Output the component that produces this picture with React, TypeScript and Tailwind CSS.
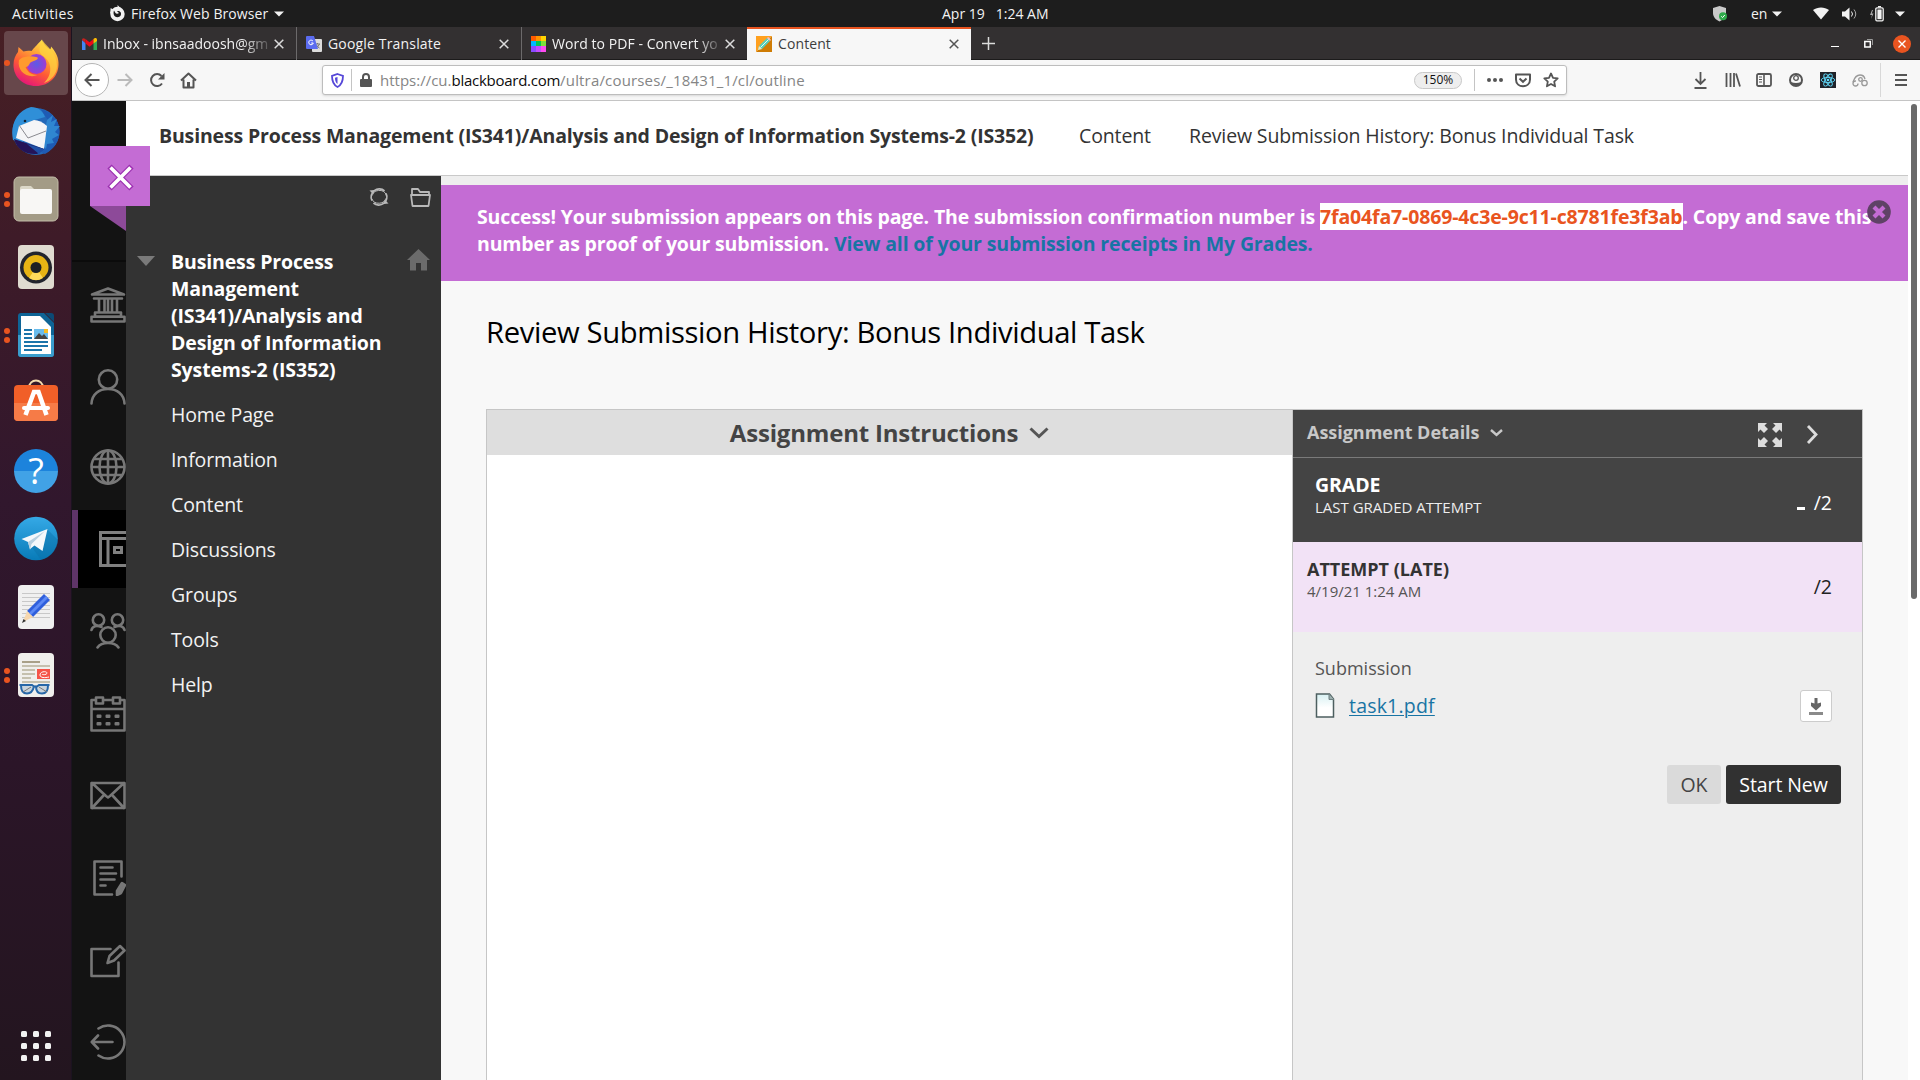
import React from "react";

type P = { children?: React.ReactNode; className?: string };

const Caret = ({ className = "" }: P) => (
  <svg width="10" height="6" viewBox="0 0 10 6" className={className}><path d="M0 .5h10L5 5.5z" fill="#f2f2f2" /></svg>
);

/* ---------- Desktop top bar ---------- */
function TopBar() {
  return (
    <div className="relative flex h-[27px] shrink-0 items-center bg-[#1d1d1d] text-[14px] leading-[27px] text-[#f2f2f2]">
      <span className="ml-3 w-[96px] tracking-[0.43px]">Activities</span>
      <svg width="17" height="17" viewBox="0 0 17 17" className="ml-px">
        <circle cx="8.5" cy="9" r="7.2" fill="#f2f2f2" />
        <path d="M8.5 0 12.5 4 9 5zM1 9 1.7 3l3 2z" fill="#f2f2f2" />
        <path d="M5 5.5C4 8 4.500 12 8.500 12.200c3 0 4-2.500 3.300-4.700C11 6 9.500 5.500 8 6.200L10 8c-1 1-3 1-3.500 0z" fill="#1d1d1d" />
      </svg>
      <span className="ml-[5px] w-[143px] whitespace-nowrap tracking-[0.08px]">Firefox Web Browser</span>
      <Caret />
      <div className="absolute left-[942px] top-0 whitespace-pre tracking-[0px]">Apr 19{"   "}1:24 AM</div>
      <div className="ml-auto flex items-center pr-[15px]">
        <svg width="15" height="16" viewBox="0 0 15 16">
          <path d="M6.500 0 13 2v5c0 4-3 7-6.500 8.500C3 14 0 11 0 7V2z" fill="#c9c9c9" />
          <circle cx="10" cy="10.200" r="4" fill="#2eaa4a" />
          <path d="m8.200 10.300 1.300 1.300 2.300-2.600" stroke="#fff" fill="none" />
        </svg>
        <span className="ml-[23px] w-[21px]">en</span>
        <Caret />
        <svg width="16" height="13" viewBox="0 0 16 13" className="ml-[31px]"><path d="M8 12.500 0 3C4.500-.5 11.500-.5 16 3z" fill="#f2f2f2" /></svg>
        <svg width="16" height="14" viewBox="0 0 16 14" className="ml-[13px]">
          <path d="M0 4.500h3L7.500.5v13L3 9.500H0z" fill="#f2f2f2" />
          <path d="M9.500 4.500q2 2.500 0 5" stroke="#f2f2f2" fill="none" /><path d="M12 2.500q3.500 4.500 0 9" stroke="#aaa" fill="none" />
        </svg>
        <svg width="15" height="16" viewBox="0 0 15 16" className="ml-[11px]">
          <path d="M3 4 1 9h2l-1 4 2.500-5.500H2.800L4 4z" fill="#aaa" />
          <rect x="6.800" y="1.800" width="7.400" height="13" rx="1.200" stroke="#f2f2f2" strokeWidth="1.300" fill="none" /><rect x="8.400" y="3.500" width="4.200" height="9.700" fill="#f2f2f2" /><rect x="9" y="0" width="3" height="1.500" fill="#f2f2f2" />
        </svg>
        <Caret className="ml-[11px]" />
      </div>
    </div>
  );
}

/* ---------- Dock ---------- */
function DockItem({ dots = 0, active = false, children }: P & { dots?: number; active?: boolean }) {
  return (
    <div className="relative flex h-16 w-[72px] shrink-0 justify-center">
      <div className="absolute left-1 top-0 flex h-16 flex-col items-start justify-center gap-[3px]">
        {Array.from({ length: dots }, (_, i) => <i key={i} className="size-[6px] rounded-full bg-[#e95420]" />)}
      </div>
      <div className={active ? "grid h-16 w-16 place-items-center rounded bg-[#67474b]" : "grid h-16 w-16 place-items-center"}>{children}</div>
    </div>
  );
}

function Dock() {
  return (
    <div className="flex w-[72px] shrink-0 flex-col items-center gap-1 bg-[linear-gradient(180deg,#471f24_0%,#3e1b28_20%,#31172d_45%,#2b1528_70%,#23151f_100%)] pt-1 shadow-[inset_-1px_0_0_#1b1320]">
      <DockItem active dots={1}>
        <svg width="48" height="48" viewBox="0 0 48 48">
          <defs>
            <linearGradient id="ff" x1=".8" y1="0" x2=".3" y2="1"><stop offset="0" stopColor="#fff44f" /><stop offset=".35" stopColor="#ffa436" /><stop offset=".65" stopColor="#ff5a35" /><stop offset="1" stopColor="#e3147b" /></linearGradient>
            <radialGradient id="fp"><stop offset="0" stopColor="#5b5be6" /><stop offset="1" stopColor="#a13bd0" /></radialGradient>
          </defs>
          <path d="M24 47C11 47 1.500 38 1.500 26c0-6 2-10 4.500-13l.5-5 5 4.500c3-1 5.500-1 8-.5C22 9 24 7 30 .5c1 4 4 7 8 10 1-1 1-2 1-3C44 13 47 19 46.500 26 46 38 37 47 24 47z" fill="url(#ff)" />
          <circle cx="24.500" cy="25" r="10" fill="url(#fp)" />
          <path d="M7 21c2-2 4-3 6-3 3-1 7-1 11 0 2 .2 2 1 1.500 2-2 2-7 2-8 5-1 2-2 3-4 3 2 5 6 8 12 8-9 4-21-3-18.500-15z" fill="#ff9a2e" />
          <path d="M31 2c4 6 14 12 14 25 0 8-6 15-13 17 5-5 7-11 6-17-1-5-4-8-8-11-4-3-3-9 1-14z" fill="#ffd23f" opacity=".75" />
        </svg>
      </DockItem>
      <DockItem>
        <svg width="50" height="50" viewBox="0 0 50 50">
          <circle cx="25" cy="25.500" r="23.500" fill="#2368b8" />
          <path d="M2 34C-1 20 5 5 20 1c7 0 12 4 14 10l-14 4-9 12 1 10z" fill="#2f8fd8" />
          <path d="M30 3c24 7 24 35 4 45l-4-2 4-12 4-18z" fill="#1e5bb4" />
          <path d="m36 14 6-5-2 7 6-3-3 7 6 0-5 6 4 3-7 4 2 4-7 1-1 5-4-4z" fill="#2f86d0" />
          <path d="m8 20 15-6c4 0 9 2 13 6l-3 23L5 32z" fill="#f5f5f7" /><path d="m8 19 9 13 18-7" fill="none" stroke="#8a8a90" />
          <path d="M3 33 33 43l-7 5C14 49 6 43 3 33z" fill="#241458" /><path d="m16 38 17 5-5 5z" fill="#1e4fa6" /><circle cx="14" cy="15" r="1.300" fill="#123" />
        </svg>
      </DockItem>
      <DockItem dots={2}>
        <svg width="46" height="46" viewBox="0 0 46 46">
          <rect x="1" y="1" width="44" height="44" rx="5" fill="#a39b86" stroke="#c3bda9" />
          <path d="M7 12q0-2 2-2h9l4 4v6H7z" fill="#dcd8c8" /><rect x="7" y="13" width="32" height="25" rx="2" fill="#f8f7f5" />
        </svg>
      </DockItem>
      <DockItem>
        <svg width="46" height="46" viewBox="0 0 46 46">
          <rect x="5" y="1" width="36" height="44" rx="4" fill="#dfdbd0" /><circle cx="23" cy="23.500" r="16" fill="#22252d" /><circle cx="23" cy="23.500" r="12.500" fill="#e7b414" />
          <path d="M23 23.500 16 34a12.500 12.500 0 0 0 14 0z" fill="#ffd95a" /><circle cx="23" cy="23.500" r="5.500" fill="#1d1f24" />
        </svg>
      </DockItem>
      <DockItem dots={2}>
        <svg width="46" height="46" viewBox="0 0 46 46">
          <path d="M8 1h23l10 10v31q0 3-3 3H8q-3 0-3-3V4q0-3 3-3z" fill="#0e6496" /><path d="M5 23h36v19q0 3-3 3H8q-3 0-3-3z" fill="#3a9dcd" />
          <path d="M32 1h6q3 0 3 3v6z" fill="#0c4a75" /><path d="M8 4h19l11 11v27H8z" fill="#fff" />
          <path d="M11 18h8M11 22h8M11 26h8M11 30h24M11 34h24M11 38h18" stroke="#1b74aa" strokeWidth="2" />
          <rect x="21" y="17" width="14" height="10" fill="#69bcec" /><path d="m21 27 5-6 3 3 2-2 4 5z" fill="#444" /><rect x="31" y="17" width="4" height="4" fill="#f6bd24" />
        </svg>
      </DockItem>
      <DockItem>
        <svg width="46" height="50" viewBox="0 -3 46 50">
          <path d="M16 7c0-10 14-10 14 0" stroke="#f4dcae" strokeWidth="2" fill="none" /><rect x="1" y="4" width="44" height="36" rx="4" fill="#f15f28" /><path d="M1 22h44v14q0 4-4 4H5q-4 0-4-4z" fill="#f67b47" />
          <path d="m12.500 34 8.500-23h4.500l8 23" stroke="#fff" strokeWidth="4.500" fill="none" /><path d="M11 27h24" stroke="#fff" strokeWidth="4" strokeLinecap="round" />
        </svg>
      </DockItem>
      <DockItem>
        <div className="grid size-11 place-items-center rounded-full bg-[linear-gradient(180deg,#1c83dc_0_50%,#41a2e6_50%)] text-[36px] leading-none text-white">?</div>
      </DockItem>
      <DockItem>
        <svg width="46" height="46" viewBox="0 0 46 46">
          <defs><linearGradient id="tg" x2="0" y2="1"><stop stopColor="#35a9e6" /><stop offset="1" stopColor="#087bb8" /></linearGradient></defs>
          <circle cx="23" cy="22.500" r="21.800" fill="url(#tg)" /><path d="m34 13 11 11a22 22 0 0 1-17 20L18 30z" fill="#0a6fa6" opacity=".4" />
          <path d="M8.500 23 34.500 13l-5 22-8-5.500L17 33l-2-7z" fill="#f4f8fb" /><path d="m15 26 17-11-13.500 13L17 34z" fill="#b7cfdf" />
        </svg>
      </DockItem>
      <DockItem>
        <svg width="46" height="46" viewBox="0 0 46 46">
          <rect x="5" y="1" width="36" height="44" rx="4" fill="#f0f0f0" /><path d="M9 9.500h28M9 13.500h28M9 17.500h28M9 21.500h28M9 25.500h28M9 29.500h28M9 33.500h28" stroke="#c8c8c8" />
          <path d="m31 10 6 6-17 17-6-6z" fill="#2f5fdc" /><path d="m33 12 2 2-17 17-2-2z" fill="#5d89f5" /><path d="m14 27 6 6-10 5z" fill="#f6d7ae" /><path d="m10.500 35 2.500 2-4 2z" fill="#333" />
        </svg>
      </DockItem>
      <DockItem dots={2}>
        <svg width="46" height="46" viewBox="0 0 46 46">
          <rect x="5" y="1" width="36" height="44" rx="4" fill="#f0efec" /><path d="M9 10h18" stroke="#a9a088" strokeWidth="2" /><path d="M9 14h28M9 18h13M9 22h13M9 26h9M9 30h28" stroke="#c5c0ae" strokeWidth="2" />
          <rect x="24" y="17" width="13" height="10" fill="#f55448" /><path d="M36 25c-4 1-9 1-9-2 0-4 7-4 7-2s-5 2-5 1" stroke="#fff" fill="none" />
          <path d="M6.500 33h12.500l2 1.500h3l2-1.500h10.500M8 33.500c0 5 2 8 6 8s6-3 7-7M35 33.500c0 5-2 8-6 8s-6-3-6-7" fill="#c7d3dc" stroke="#2667a8" strokeWidth="2" /><path d="m10 40 8-5m8 0 8 5" stroke="#777" />
        </svg>
      </DockItem>
      <div className="mb-[19px] mt-auto grid grid-cols-3 gap-[6px]">
        {Array.from({ length: 9 }, (_, i) => <i key={i} className="size-[6px] rounded-[1.500px] bg-[#f2f2f2]" />)}
      </div>
    </div>
  );
}

/* ---------- Browser chrome ---------- */
const X = ({ c }: { c: string }) => <svg width="10" height="10" viewBox="0 0 10 10" className="shrink-0"><path d="m.7.7 8.600 8.600m0-8.600L.7 9.300" stroke={c} strokeWidth="1.500" /></svg>;

function TabStrip() {
  return (
    <div className="flex h-[33px] shrink-0 items-stretch bg-[#333031] text-[14px] leading-[33px] text-[#f2f2f2] shadow-[inset_0_-1px_0_#1c1b1b]">
      <div className="flex w-[225px] items-center border-r border-[#6c6a6b] pl-[10px] pr-3">
        <svg width="15" height="12" viewBox="0 0 15 12">
          <path d="M0 2v10h3.500V5z" fill="#4285f4" /><path d="M15 2v10h-3.500V5z" fill="#34a853" /><path d="m0 2 3.500 3V1L1.500.2C.5.200 0 1 0 2z" fill="#c5221f" /><path d="m3.500 1 4 3.200 4-3.200v4.500l-4 3.200-4-3.200z" fill="#ea0a1a" /><path d="M11.500 1v4.500L15 3V1.500C15 .4 13.500-.3 12.500.3z" fill="#fbbc04" />
        </svg>
        <span className="ml-[6px] whitespace-nowrap [mask-image:linear-gradient(90deg,#000_84%,rgba(0,0,0,0.2))]">Inbox - ibnsaadoosh@gm</span>
        <span className="ml-auto"><X c="#dcdcdc" /></span>
      </div>
      <div className="flex w-[224px] items-center pl-[9px] pr-[12px]">
        <svg width="16" height="16" viewBox="0 0 16 16"><rect x="6" y="3" width="10" height="13" rx="1" fill="#dcdcdc" /><path d="M9 8h5m-2.500-1v1m2 0q-1 3-4 4m1-3q1 2 3 3" stroke="#777" fill="none" /><path d="M1 0h7l4 13H1q-1 0-1-1V1q0-1 1-1z" fill="#5b6cf0" /><path d="M7 5.200A2.300 2.300 0 1 0 7.300 7H5.200" stroke="#fff" fill="none" /></svg>
        <span className="ml-[6px] tracking-[0.17px]">Google Translate</span>
        <span className="ml-auto"><X c="#dcdcdc" /></span>
      </div>
      <div className="flex w-[226px] items-center border-l border-[#6c6a6b] pl-[9px] pr-3">
        <div className="grid h-4 w-[15px] shrink-0 grid-cols-3 overflow-hidden">
          {["#ff5b00", "#ff9500", "#ffd400", "#00b8ff", "#00c853", "#7ee03c", "#8a4bff", "#c34bff", "#ff4bf0"].map((c) => <i key={c} style={{ background: c }} />)}
        </div>
        <span className="ml-[6px] whitespace-nowrap tracking-[0.06px] [mask-image:linear-gradient(90deg,#000_88%,rgba(0,0,0,0.2))]">Word to PDF - Convert yo</span>
        <span className="ml-auto"><X c="#dcdcdc" /></span>
      </div>
      <div className="flex w-[224px] items-center border-t-2 border-[#e95420] bg-[#f7f7f7] pb-[2px] pl-[9px] pr-[12px] text-[#3d3d3d]">
        <svg width="16" height="16" viewBox="0 0 16 16"><path d="M0 0h16L0 16z" fill="#ffa01e" /><path d="M16 0v16H0z" fill="#cf7c04" /><path d="m3 10 8-8 3 3-8 8-4 1z" fill="#58cdb8" /><path d="m11 2 1-1q1 0 3 3l-1 1z" fill="#f0b9c8" /><path d="m3 10 3 3-4 1z" fill="#f8e2b4" /><path d="m4.500 11.500 8-8" stroke="#d9fff6" /></svg>
        <span className="ml-[6px] tracking-[0.1px]">Content</span>
        <span className="ml-auto"><X c="#555" /></span>
      </div>
      <svg width="13" height="13" viewBox="0 0 13 13" className="ml-[11px] mt-[10px]"><path d="M6.500 0v13M0 6.500h13" stroke="#dcdcdc" strokeWidth="1.500" /></svg>
      <div className="ml-auto flex items-center pr-[9px]">
        <i className="mt-[5px] h-px w-2 bg-white" />
        <svg width="9" height="9" viewBox="0 0 9 9" className="ml-[25px]"><path d="M3 .5h5.500V6" stroke="#999" fill="none" /><rect x=".8" y="2.500" width="5.500" height="5.500" stroke="#fff" strokeWidth="1.500" fill="none" /></svg>
        <span className="ml-[20px] grid size-[18px] place-items-center rounded-full bg-[#e95420]"><svg width="8" height="8" viewBox="0 0 8 8"><path d="m.5.500 7 7m0-7-7 7" stroke="#fff" strokeWidth="1.400" /></svg></span>
      </div>
    </div>
  );
}

function NavBar() {
  return (
    <div className="relative flex h-[41px] shrink-0 items-center border-b border-[#c4c4c4] bg-[#f7f7f7] text-[14px] text-[#555]">
      <div className="ml-[3px] grid size-[34px] place-items-center rounded-full border border-[#b5b5b5] bg-white">
        <svg width="16" height="14" viewBox="0 0 16 14"><path d="M15.500 7H1.500M7.500 1l-6 6 6 6" stroke="#555" strokeWidth="2" fill="none" /></svg>
      </div>
      <svg width="16" height="14" viewBox="0 0 16 14" className="ml-2"><path d="M.5 7h14m-6-6 6 6-6 6" stroke="#bbb" strokeWidth="2" fill="none" /></svg>
      <svg width="16" height="16" viewBox="0 0 16 16" className="ml-4"><path d="M13 11.500A6 6 0 1 1 12.500 4" stroke="#555" strokeWidth="2" fill="none" /><path d="M15.500 1v6.500H9z" fill="#555" /></svg>
      <svg width="17" height="17" viewBox="0 0 17 17" className="ml-[15px]"><path d="m1 8.500 7.500-7 7.500 7M3.500 7.500V15.500h10v-8" stroke="#555" strokeWidth="2" fill="none" strokeLinejoin="round" /><path d="M7 15v-5h3v5" fill="#555" /></svg>
      <div className="ml-[125px] flex h-[30px] w-[1245px] items-center rounded-[3px] border border-[#bdbdbd] bg-white pl-2 shadow-sm">
        <svg width="13" height="15" viewBox="0 0 13 15"><path d="M6.500 1 12 2.800c0 5-1 9-5.500 11.200C2 11.800 1 7.800 1 2.800z" stroke="#5547d8" strokeWidth="1.800" fill="none" /><path d="M6.500 4v7C4.500 9.500 4 7.500 4 4.800z" fill="#5547d8" /></svg>
        <i className="ml-[7px] h-[22px] w-px bg-[#c4c4c4]" />
        <svg width="12" height="14" viewBox="0 0 12 14" className="ml-2"><rect y="6" width="12" height="8" rx="1" fill="#555" /><path d="M3 7V4a3 3 0 0 1 6 0v3" stroke="#555" strokeWidth="2" fill="none" /></svg>
        <span className="ml-[8px] whitespace-nowrap text-[15px] tracking-[0.17px] text-[#858585]"><span className="tracking-normal">https://cu.</span><span className="tracking-[-0.26px] text-[#0c0c0c]">blackboard.com</span>/ultra/courses/_18431_1/cl/outline</span>
        <span className="ml-auto grid h-[17px] w-[48px] place-items-center rounded-full border border-[#c8c8c8] bg-[#eee] text-[12px] leading-none text-[#111]">150%</span>
        <i className="ml-3 h-[22px] w-px bg-[#c4c4c4]" />
        <svg width="16" height="4" viewBox="0 0 16 4" className="ml-3"><circle cx="2" cy="2" r="2" fill="#555" /><circle cx="8" cy="2" r="2" fill="#555" /><circle cx="14" cy="2" r="2" fill="#555" /></svg>
        <svg width="16" height="15" viewBox="0 0 16 15" className="ml-3"><path d="M1 1.500h14v5c0 9-14 9-14 0z" stroke="#555" strokeWidth="2" fill="none" strokeLinejoin="round" /><path d="m4.500 5.500 3.500 3.300 3.500-3.300" stroke="#555" strokeWidth="2" fill="none" /></svg>
        <svg width="16" height="16" viewBox="0 0 16 16" className="ml-3 mr-[7px]"><path d="m8 1.500 2 4.300 4.700.6-3.500 3.200.9 4.700L8 12l-4.100 2.300.9-4.700L1.300 6.400 6 5.800z" stroke="#555" strokeWidth="1.800" fill="none" strokeLinejoin="round" /></svg>
      </div>
      <div className="ml-auto flex items-center pr-[13px]">
        <svg width="13" height="17" viewBox="0 0 13 17"><path d="M6.500 0v12M1.500 7l5 5 5-5M.5 16h12" stroke="#555" strokeWidth="1.800" fill="none" /></svg>
        <svg width="16" height="14" viewBox="0 0 16 14" className="ml-[18px]"><path d="M1.500 0v14M5.500 0v14M9 0v14M11 .5l4 13" stroke="#555" strokeWidth="1.800" fill="none" /></svg>
        <svg width="16" height="14" viewBox="0 0 16 14" className="ml-[15px]"><rect x="1" y="1" width="14" height="12" rx="1.500" stroke="#555" strokeWidth="1.800" fill="none" /><path d="M8 1v12" stroke="#555" strokeWidth="1.600" /><path d="M3 4h3M3 6.500h3M3 9h3" stroke="#555" /></svg>
        <svg width="14" height="14" viewBox="0 0 14 14" className="ml-[17px]"><circle cx="7" cy="7" r="6" stroke="#555" strokeWidth="2" fill="none" /><circle cx="7" cy="5" r="2.300" stroke="#555" strokeWidth="1.300" fill="none" /><path d="M2 9q5 2 10 0-1 4-5 4T2 9z" fill="#555" /></svg>
        <svg width="16" height="16" viewBox="0 0 16 16" className="ml-[17px]"><path d="M0 0h16v16H0z" fill="#20232a" /><g stroke="#61dafb" fill="none" strokeWidth=".9"><ellipse cx="8" cy="8" rx="6.800" ry="2.600" /><ellipse cx="8" cy="8" rx="6.800" ry="2.600" transform="rotate(60 8 8)" /><ellipse cx="8" cy="8" rx="6.800" ry="2.600" transform="rotate(120 8 8)" /></g><circle cx="8" cy="8" r="1.300" fill="#61dafb" /></svg>
        <svg width="16" height="13" viewBox="0 0 16 13" className="ml-4"><g stroke="#999" strokeWidth="1.300" fill="none"><path d="M1 8C3 2 5.500 1 8 1q4 0 5 4" /><circle cx="8.500" cy="5.500" r="1.800" /><circle cx="3.500" cy="9.500" r="2.500" strokeDasharray="12 5" /><circle cx="12.500" cy="9" r="2.700" /></g></svg>
        <i className="ml-[12px] h-[34px] w-px bg-[#d8d8d8]" />
        <svg width="12" height="12" viewBox="0 0 12 12" className="ml-[14px]"><path d="M0 1h12M0 6h12M0 11h12" stroke="#555" strokeWidth="1.800" /></svg>
      </div>
    </div>
  );
}

/* ---------- Blackboard ---------- */
const RailIcon = ({ children, className = "" }: P) => (
  <div className={"flex h-[82px] w-[54px] shrink-0 items-center overflow-hidden pl-[18px] " + className}>
    <svg width="36" height="36" viewBox="0 0 36 36" className="shrink-0" fill="none" stroke="#777" strokeWidth="2.600" strokeLinejoin="round" strokeLinecap="round">{children}</svg>
  </div>
);

function Rail() {
  return (
    <div className="flex w-[54px] shrink-0 flex-col overflow-hidden bg-[#131313]">
      <div className="h-[161px] shrink-0 border-b-2 border-[#0b0b0b]" />
      <div className="h-[2px] shrink-0" />
      <RailIcon><path d="M2 7.500 18 1.500l16 6zM4 11.500h28M9 12v13M14.500 12v13M18 12v13M22 12v13M27 12v13M5 25.500h26v4H5zM1.500 29.800h33v4.700h-33z" /></RailIcon>
      <RailIcon><circle cx="18" cy="10.500" r="9.200" /><path d="M1.500 34.500C2 25 9 20 18 20s16 5 16.500 14.500" /></RailIcon>
      <RailIcon className="-mt-[2px]"><circle cx="18" cy="18" r="16.500" /><ellipse cx="18" cy="18" rx="8.500" ry="16.500" /><path d="M18 1.500v33M2 18h32M4.500 10h27M4.500 26h27" /></RailIcon>
      <div className="mt-[2px] flex h-[78px] shrink-0 items-center border-l-[6px] border-[#5e3468] bg-black pl-[21px]">
        <svg width="36" height="36" viewBox="0 0 36 36" className="shrink-0" fill="none" stroke="#808080" strokeWidth="3"><path d="M1.500 1.500h33v33h-33zM1.500 7.500h33M9 7.500v27M15.500 16.500h7v5h-7z" /></svg>
      </div>
      <RailIcon className="mt-[2px]"><circle cx="8.500" cy="7" r="5.700" /><circle cx="27.500" cy="7" r="5.700" /><circle cx="18" cy="22" r="7.700" /><path d="M1.500 17c1-4 5-5 10-3M34.500 17c-1-4-5-5-10-3M7.500 34.500c4-6 17-6 21 0" /></RailIcon>
      <RailIcon className="pt-[2px]"><path d="M1.500 4h33v30.500h-33zM1.500 13h33" /><path d="M6 1.500h7v6H6zM23 1.500h7v6h-7z" fill="#131313" /><g fill="#777"><path d="M7.500 19.500h3v1.500h-3zM16.500 19.500h3v1.500h-3zM25.500 19.500h3v1.500h-3zM7.500 27h3v1.500h-3zM16.500 27h3v1.500h-3zM25.500 27h3v1.500h-3z" strokeWidth="2" /></g></RailIcon>
      <RailIcon><path d="M1.500 6h33v25h-33zM2 6l14 13 2 1.500 2-1.500L34 6M2 31l11-12M34 31 23 19" /></RailIcon>
      <RailIcon className="pt-px"><path d="M22 34.500H4.500v-33h27v15M10.500 7.500h12M10.500 13.500h15.500M10.500 19.500h14M10.500 25.500h5" /><path d="m32 23 3 2-4 8-4 2v-4z" fill="#777" /></RailIcon>
      <RailIcon className="pt-[6px]"><path d="M20.500 5h-19v27h27V18.500" /><path d="m30 2 4.500 4.500L24 16.500 17.500 19l2-7z" /></RailIcon>
      <RailIcon className="-mt-px pt-[4px]"><path d="M8.500 4.500a16.500 16.500 0 1 1 0 27M22.500 18H2M8 11.500 1.800 18 8 24.500" /></RailIcon>
    </div>
  );
}

function CourseMenu() {
  return (
    <div className="flex w-[315px] shrink-0 flex-col bg-[#333] text-[19.5px] tracking-[-0.13px] text-[#f2f2f2]">
      <div className="flex h-[42px] items-center justify-end pr-[10px]">
        <svg width="20" height="20" viewBox="0 0 20 20" fill="none" stroke="#b9b9b9" strokeWidth="1.800"><path d="M3 13.500A8 8 0 0 1 15.500 4M17 6.500A8 8 0 0 1 4.500 16" /><path d="M2.500 9.500A8 8 0 0 1 17.500 8M17.500 10.500a8 8 0 0 1-15 1" strokeWidth="1" /><path d="M.5 3.500 5 3l-.5 4.500zM19.500 16.500 15 17l.5-4.500z" fill="#b9b9b9" stroke="none" /></svg>
        <svg width="21" height="19" viewBox="0 0 21 19" className="ml-[21px]" fill="none" stroke="#b9b9b9" strokeWidth="1.800" strokeLinejoin="round"><path d="M2 7V1h6l2 3h9v3M1 7h19l-1.500 11h-16z" /></svg>
      </div>
      <div className="mt-[30px] flex items-start">
        <svg width="18" height="10" viewBox="0 0 18 10" className="ml-[11px] mt-[8px]"><path d="M0 0h18L9 10z" fill="#7a7a7a" /></svg>
        <div className="ml-[16px] w-[225px] whitespace-nowrap font-bold leading-[27px] text-white">
          Business Process<br />Management<br />(IS341)/Analysis and<br />Design of Information<br />Systems-2 (IS352)
        </div>
        <svg width="23" height="22" viewBox="0 0 23 22" className="ml-[11px] mt-px"><path d="M11.500 0 23 11h-3v10.500h-6V14H9v7.500H3V11H0z" fill="#6b6b6b" /></svg>
      </div>
      <ul className="mt-[9px] pl-[45px]">
        {["Home Page", "Information", "Content", "Discussions", "Groups", "Tools", "Help"].map((t) => <li key={t} className="h-[45px] leading-[45px]">{t}</li>)}
      </ul>
    </div>
  );
}

function Details() {
  return (
    <div className="flex w-[571px] flex-col border-x border-[#c6c6c6] bg-[#eee]">
      <div className="flex h-[48px] items-start border-b border-[#7a7a7a] bg-[#444] pl-[14px]">
        <span className="mt-[9px] text-[18px] font-bold leading-[27px] tracking-[-0.03px] text-[#c8c8c8]">Assignment Details</span>
        <svg width="13" height="8" viewBox="0 0 13 8" className="ml-[11px] mt-[19px]"><path d="m1 1 5.500 5L12 1" stroke="#c8c8c8" strokeWidth="2.400" fill="none" /></svg>
        <div className="ml-auto mt-[13px] flex pr-[43px]">
          <svg width="24" height="24" viewBox="0 0 24 24" fill="#ddd"><path d="M0 0h9L6.500 2.500 10 6 6 10 2.500 6.500 0 9zM24 0h-9l2.500 2.500L14 6l4 4 3.500-3.500L24 9zM0 24h9l-2.500-2.500L10 18l-4-4-3.500 3.500L0 15zM24 24h-9l2.500-2.500L14 18l4-4 3.500 3.500L24 15z" /></svg>
          <svg width="13" height="19" viewBox="0 0 13 19" className="ml-[24px] mt-[2px]"><path d="m2 1 8 8.500L2 18" stroke="#ddd" strokeWidth="2.800" fill="none" /></svg>
        </div>
      </div>
      <div className="flex h-[84px] justify-between bg-[#444] pl-[22px] pr-[30px] text-white">
        <div className="pt-[13px]"><div className="text-[19.5px] font-bold leading-[27px] tracking-[-0.1px]">GRADE</div><div className="text-[15px] leading-[19px] text-[#eee]">LAST GRADED ATTEMPT</div></div>
        <div className="flex pt-[31px] text-[19.5px] leading-[27px]"><i className="mr-[9px] mt-[18px] h-[3px] w-2 bg-white" />/2</div>
      </div>
      <div className="flex h-[90px] justify-between bg-[#f2e2f6] pl-[14px] pr-[30px]">
        <div className="pt-[14px]"><div className="text-[18px] font-bold leading-[27px] text-[#333]">ATTEMPT (LATE)</div><div className="text-[15px] leading-[16px] text-[#555]">4/19/21 1:24 AM</div></div>
        <div className="pt-[31px] text-[19.5px] leading-[27px] text-[#222]">/2</div>
      </div>
      <div className="pl-[22px] pr-[30px] pt-[23px]">
        <div className="text-[18px] leading-[27px] text-[#555]">Submission</div>
        <div className="mt-[8px] flex items-center">
          <svg width="21" height="25" viewBox="0 0 21 25" className="-mt-[2px]"><defs><linearGradient id="pg" x2="0" y2="1"><stop stopColor="#d7f0f2" /><stop offset=".6" stopColor="#fff" /></linearGradient></defs><path d="M1.500 1h13l4 5v18h-17z" fill="url(#pg)" stroke="#4d5f60" strokeWidth="1.500" /><path d="M14 1v5.500h5" fill="#9dafaf" stroke="#6d7f80" /></svg>
          <span className="-mt-[2px] ml-[13px] text-[19.5px] leading-[27px] tracking-[0.2px] text-[#1874a4] underline decoration-[1px] underline-offset-[2px]">task1.pdf</span>
          <div className="ml-auto grid size-8 place-items-center rounded-[3px] border border-[#ccc] bg-white">
            <svg width="14" height="17" viewBox="0 0 14 17"><path d="M5.500 0h3v5.500l3.500-1V8l-5 4.500L2 8V4.500l3.500 1z" fill="#666" /><path d="M0 14h14v3H0z" fill="#8a8a8a" /></svg>
          </div>
        </div>
      </div>
      <div className="mt-[43px] flex justify-end gap-[5px] pr-[21px] text-[19.5px] leading-[39px] tracking-[-0.1px]">
        <div className="h-[39px] w-[54px] rounded-[3px] bg-[#dadada] text-center text-[#444]">OK</div>
        <div className="h-[39px] w-[115px] rounded-[3px] bg-[#313131] text-center text-white">Start New</div>
      </div>
    </div>
  );
}

function Page() {
  return (
    <div className="relative flex min-h-0 flex-1 bg-white">
      <Rail />
      <div className="flex w-[1782px] flex-col">
        <div className="flex h-[75px] shrink-0 items-center whitespace-nowrap border-b border-[#c9c9c9] bg-white pb-[4px] pl-[33px] text-[19.5px] tracking-[-0.13px] text-[#333]">
          <span className="w-[920px] font-bold tracking-[-0.155px]">Business Process Management (IS341)/Analysis and Design of Information Systems-2 (IS352)</span>
          <span className="w-[110px]">Content</span>
          <span>Review Submission History: Bonus Individual Task</span>
        </div>
        <div className="flex min-h-0 flex-1">
          <CourseMenu />
          <div className="flex min-w-0 flex-1 flex-col bg-[#f8f8f8]">
            <div className="h-[9px] shrink-0 bg-[#eee]" />
            <div className="relative h-[96px] shrink-0 whitespace-nowrap bg-[#c46cd4] pl-[36px] pt-[18px] text-[19.5px] font-bold leading-[27px] tracking-[-0.15px] text-white">
              Success! Your submission appears on this page. The submission confirmation number is <span className="bg-white text-[#e95420]">7fa04fa7-0869-4c3e-9c11-c8781fe3f3ab</span>. Copy and save this<br />
              number as proof of your submission. <span className="text-[#1874a4]">View all of your submission receipts in My Grades.</span>
              <svg width="24" height="24" viewBox="0 0 24 24" className="absolute right-[17px] top-[15px]"><circle cx="12" cy="12" r="11.800" fill="#5f4266" /><path d="m7 7 10 10m0-10L7 17" stroke="#c46cd4" strokeWidth="4.200" /></svg>
            </div>
            <h1 className="ml-[45px] mt-[30px] whitespace-nowrap text-[29.25px] leading-[42px] tracking-[-0.38px] text-black">Review Submission History: Bonus Individual Task</h1>
            <div className="ml-[45px] mt-[56px] flex w-[1377px] flex-1 border-t border-[#c6c6c6]">
              <div className="flex flex-1 flex-col border-l border-[#c6c6c6] bg-white">
                <div className="flex h-[45px] items-center justify-center bg-[#dedede] text-[24px] font-bold leading-[45px] tracking-[-0.19px] text-[#444]">
                  Assignment Instructions
                  <svg width="20" height="12" viewBox="0 0 20 12" className="ml-[11px]"><path d="m1.500 1.500 8.500 8 8.500-8" stroke="#555" strokeWidth="3" fill="none" /></svg>
                </div>
              </div>
              <Details />
            </div>
          </div>
        </div>
      </div>
      <div className="ml-[3px] mt-[3px] h-[495px] w-[6px] rounded-full bg-[#6a6a6a]" />
      <div className="absolute left-[18px] top-[45px]">
        <div className="grid size-[60px] place-items-center bg-[#c46cd4] pt-[3px]">
          <svg width="27" height="27" viewBox="0 0 27 27"><path d="m2.500 2.500 22 22m0-22-22 22" stroke="#9c2fb0" strokeWidth="6" /><path d="m3.500 3.500 20 20m0-20-20 20" stroke="#fff" strokeWidth="3.600" /></svg>
        </div>
        <svg width="36" height="25" viewBox="0 0 36 25"><path d="M0 0h36v25z" fill="#8d4a99" /></svg>
      </div>
    </div>
  );
}

export default function App() {
  return (
    <div className="flex h-[1080px] w-[1920px] flex-col overflow-hidden font-['Open_Sans','Noto_Sans',sans-serif]">
      <TopBar />
      <div className="flex min-h-0 flex-1">
        <Dock />
        <div className="flex w-[1848px] flex-col">
          <TabStrip />
          <NavBar />
          <Page />
        </div>
      </div>
    </div>
  );
}
